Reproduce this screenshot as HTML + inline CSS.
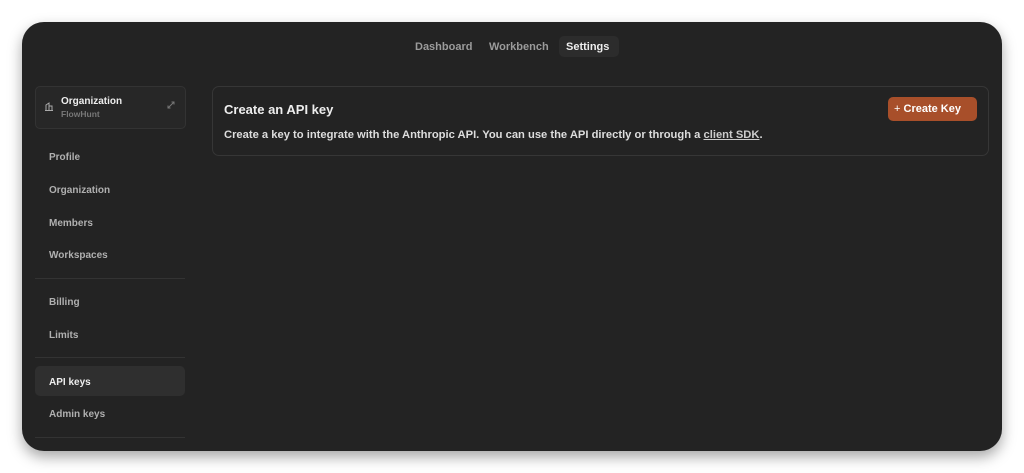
<!DOCTYPE html>
<html><head><style>
body{margin:0;width:1024px;height:473px;background:#fff;font-family:"Liberation Sans",sans-serif;position:relative;overflow:hidden}
.panel{position:absolute;left:22px;top:22px;width:980px;height:429px;background:#232323;border-radius:22px;box-shadow:0 6px 14px rgba(0,0,0,.35)}
.a{position:absolute;white-space:nowrap;font-weight:bold}
.nav{font-size:11px;color:#9b9b9b;top:41px}
.side{font-size:10px;color:#b0b0b0;left:49px}
.hr{position:absolute;left:35px;width:150px;height:1px;background:#333}
</style></head><body>
<div class="panel"></div>
<div class="a nav" style="left:415px">Dashboard</div>
<div class="a nav" style="left:489px">Workbench</div>
<div style="position:absolute;left:559px;top:36px;width:60px;height:21px;background:#2c2c2c;border-radius:5px"></div>
<div class="a nav" style="left:566px;color:#eee">Settings</div>

<div style="position:absolute;left:35px;top:86px;width:149px;height:41px;border:1px solid #333;background:#272727;border-radius:5px"></div>
<svg style="position:absolute;left:44px;top:101px" width="10" height="10" viewBox="0 0 10 10" fill="none" stroke="#aaa" stroke-width="1"><path d="M1 9.5h8M2 9.5V4l3-2v7.5M5 5h3v4.5"/></svg>
<div class="a" style="left:61px;top:96px;font-size:10px;color:#eee">Organization</div>
<div class="a" style="left:61px;top:109px;font-size:8.5px;color:#777">FlowHunt</div>
<svg style="position:absolute;left:167px;top:101px" width="8" height="8" viewBox="0 0 8 8" stroke="#777" stroke-width="1" fill="none"><path d="M1 7L7 1M4.5 1H7v2.5M1 4.5V7h2.5"/></svg>

<div class="a side" style="top:152px">Profile</div>
<div class="a side" style="top:185px">Organization</div>
<div class="a side" style="top:218px">Members</div>
<div class="a side" style="top:250px">Workspaces</div>
<div class="hr" style="top:278px"></div>
<div class="a side" style="top:297px">Billing</div>
<div class="a side" style="top:330px">Limits</div>
<div class="hr" style="top:357px"></div>
<div style="position:absolute;left:35px;top:366px;width:150px;height:30px;background:#2f2f2f;border-radius:5px"></div>
<div class="a side" style="top:377px;color:#eee">API keys</div>
<div class="a side" style="top:409px">Admin keys</div>
<div class="hr" style="top:437px"></div>

<div style="position:absolute;left:212px;top:86px;width:775px;height:68px;border:1px solid #363636;border-radius:7px"></div>
<div class="a" style="left:224px;top:102px;font-size:13px;color:#eee">Create an API key</div>
<div class="a" style="left:224px;top:129px;font-size:11.2px;color:#ddd">Create a key to integrate with the Anthropic API. You can use the API directly or through a <span style="text-decoration:underline;color:#ccc">client SDK</span>.</div>
<div style="position:absolute;left:888px;top:97px;width:89px;height:24px;background:#a84f2a;border-radius:5px"></div>
<div class="a" style="left:894px;top:103px;font-size:11px;color:#fff"><span style="font-weight:normal">+</span> Create Key</div>
</body></html>
